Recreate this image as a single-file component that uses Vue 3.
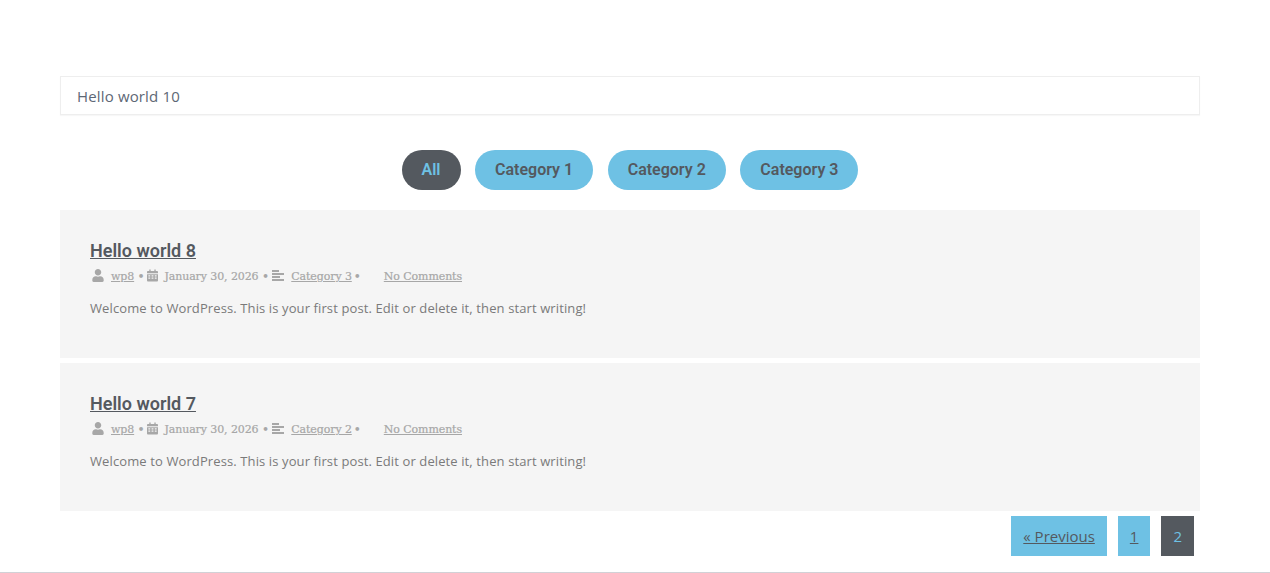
<script setup>
const posts = [
  { title: 'Hello world 8', cat: 'Category 3' },
  { title: 'Hello world 7', cat: 'Category 2' },
]
const filters = ['All', 'Category 1', 'Category 2', 'Category 3']
</script>

<template>
  <div class="page">
    <div class="wrap">
      <input class="search" type="text" value="Hello world 10" />
      <div class="filters">
        <button v-for="(f, i) in filters" :key="f" class="pill" :class="{ on: i === 0 }">{{ f }}</button>
      </div>
      <article v-for="p in posts" :key="p.title" class="post">
        <h2 class="title"><a href="#">{{ p.title }}</a></h2>
        <div class="meta">
          <svg class="ic user" viewBox="0 0 448 512"><path fill="currentColor" d="M224 256c70.700 0 128-57.300 128-128S294.700 0 224 0 96 57.300 96 128s57.300 128 128 128zm89.600 32h-16.700c-22.200 10.200-46.900 16-72.900 16s-50.600-5.800-72.900-16h-16.700C60.200 288 0 348.200 0 422.400V464c0 26.500 21.500 48 48 48h352c26.500 0 48-21.500 48-48v-41.600c0-74.200-60.200-134.400-134.400-134.400z"/></svg>
          <a href="#" class="author">wp8</a>
          <span class="dot first">•</span>
          <svg class="ic cal" viewBox="0 0 12 13"><path fill="currentColor" fill-rule="evenodd" d="M2.500 0h1.500v1.500h4V0h1.500v1.500H11a1 1 0 0 1 1 1V4H0V2.500a1 1 0 0 1 1-1h1.500zM0 5h12v7a1 1 0 0 1-1 1H1a1 1 0 0 1-1-1zm1.500 1.200v1.300h2V6.200zm3.500 0v1.300h2V6.200zm3.500 0v1.300h2V6.200zm-7 2.500v1.300h2V8.700zm3.500 0v1.300h2V8.700zm3.500 0v1.300h2V8.700z"/></svg>
          <span class="date">January 30, 2026</span>
          <span class="dot">•</span>
          <svg class="ic lines" viewBox="0 0 12 11"><path fill="currentColor" d="M0 0h7v2H0zM0 3h12v2H0zM0 6h8v2H0zM0 9h12v2H0z"/></svg>
          <a href="#" class="cat">{{ p.cat }}</a>
          <span class="dot">•</span>
          <a href="#" class="comments">No Comments</a>
        </div>
        <p class="excerpt">Welcome to WordPress. This is your first post. Edit or delete it, then start writing!</p>
      </article>
      <nav class="pager">
        <a href="#" class="pg">« Previous</a>
        <a href="#" class="pg">1</a>
        <span class="pg cur">2</span>
      </nav>
    </div>
  </div>
</template>

<style>
html, body { margin: 0; background: #fff; }
</style>

<style scoped>
.page {
  height: 573px;
  box-sizing: border-box;
  border-bottom: 1px solid #d1d1d6;
  padding-top: 76px;
  overflow: hidden;
}
.wrap {
  width: 1140px;
  margin-left: 60px;
}
.search {
  display: block;
  width: 100%;
  height: 39px;
  box-sizing: border-box;
  border: 1px solid #eeeeee;
  box-shadow: 0 1px 1px rgba(0, 0, 0, 0.03);
  padding: 0 16px;
  margin: 0;
  outline: none;
  font: 400 15px "Open Sans", sans-serif;
  letter-spacing: 0.150px;
  color: #5d6775;
  background: #fff;
}
.filters {
  display: flex;
  justify-content: center;
  gap: 14.500px;
  margin-top: 35px;
}
.pill {
  height: 40px;
  padding: 0 20px 2px;
  border: 0;
  border-radius: 20px;
  background: #6ec1e4;
  color: #54595f;
  font: 600 16px Roboto, sans-serif;
}
.pill.on {
  background: #54595f;
  color: #6ec1e4;
}
.post {
  background: #f5f5f5;
  height: 148px;
  box-sizing: border-box;
  padding: 30px 30px 0;
  margin-bottom: 5px;
}
.filters + .post { margin-top: 20px; }
.title {
  margin: 0;
  font: 600 18px/21px Roboto, sans-serif;
}
.title a { color: #54595f; }
.meta {
  display: flex;
  align-items: center;
  height: 20px;
  margin-top: 6px;
  font: 400 11px/20px "DejaVu Serif", serif;
  letter-spacing: -0.100px;
  -webkit-text-stroke: 0.200px #a7a7a7;
  color: #a7a7a7;
}
.meta a { color: #a7a7a7; }
.ic { display: block; flex: none; color: #a7a7a7; }
.user { width: 12px; height: 13px; margin: -3px 7px 0 2px; }
.cal { width: 11px; height: 13px; margin: -3px 6.500px 0 0; }
.lines { width: 12px; height: 11px; margin: -3px 7px 0 0; }
.dot { margin: 0 3.400px; font-size: 12px; }
.first { margin: 0 2.400px 0 3.400px; }
.cat + .dot { margin: 0 23px 0 2px; }
.excerpt {
  margin: 9px 0 0;
  font: 400 13px/24px "Open Sans", sans-serif;
  letter-spacing: 0.110px;
  color: #7a7a7a;
}
.pager {
  display: flex;
  justify-content: flex-end;
  gap: 11px;
  padding-right: 6px;
}
.pg {
  height: 40px;
  padding: 0 12px;
  display: flex;
  align-items: center;
  background: #6ec1e4;
  color: #54595f;
  font: 400 15px "Open Sans", sans-serif;
}
.pg.cur {
  background: #54595f;
  color: #6ec1e4;
}
</style>
